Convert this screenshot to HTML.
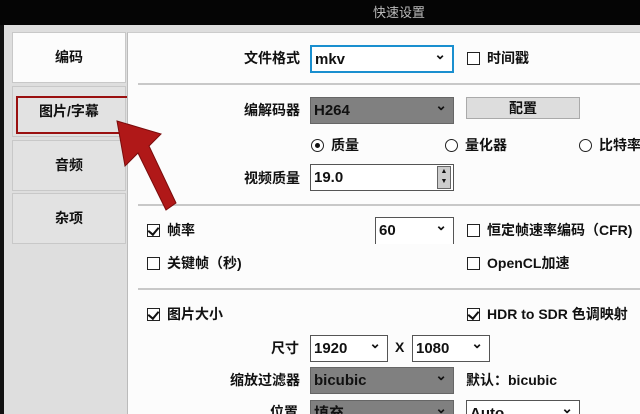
<!DOCTYPE html><html><head><meta charset="utf-8"><style>
*{margin:0;padding:0;box-sizing:border-box}
html,body{width:640px;height:414px;overflow:hidden}
body{background:#dedede;font-family:"Liberation Sans","Noto Sans CJK SC",sans-serif;font-size:14px;font-weight:bold;color:#111;position:relative}
.a{position:absolute;white-space:nowrap;line-height:18px}
.title{left:0;top:0;width:640px;height:25px;background:#050505;color:#bbb;font-weight:normal;font-size:13px;text-align:center;line-height:25px;padding-left:158px}
.lb{left:0;top:25px;width:4px;height:389px;background:#111}
.tab{left:12px;width:114px;height:51px;background:#e2e2e2;border:1px solid #c8c8c8;text-align:center;line-height:48px}
.panel{left:127px;top:32px;width:513px;height:382px;background:#fcfcfc;border-left:1px solid #bbb;border-top:1px solid #ccc}
.hr{left:138px;width:502px;height:2px;background:#c8c8c8}
.sel{height:27px;border:1px solid #555;background:#fff;line-height:25px;padding-left:3px;font-size:15px}
.sel.g{background:#808080;border-color:#666}
.sel:after{content:"⌄";position:absolute;right:6px;top:-5px;font-size:14px}
.cb{width:13px;height:13px;border:1.5px solid #222;background:#fff}
.cb.c:after{content:"";position:absolute;left:2px;top:0px;width:5px;height:8px;border-right:2px solid #111;border-bottom:2px solid #111;transform:rotate(40deg)}
.rd{width:13px;height:13px;border:1.5px solid #222;border-radius:50%;background:#fff}
.rd.c:after{content:"";position:absolute;left:2.5px;top:2.5px;width:5px;height:5px;border-radius:50%;background:#111}
</style></head><body>
<div class="a title">快速设置</div>
<div class="a lb"></div>
<div class="a tab" style="top:32px;background:#fcfcfc">编码</div>
<div class="a tab" style="top:86px">图片/字幕</div>
<div class="a tab" style="top:140px">音频</div>
<div class="a tab" style="top:193px">杂项</div>
<div class="a" style="left:16px;top:96px;width:131px;height:38px;border:2px solid #9a1010"></div>
<div class="a panel"></div>
<div class="a hr" style="top:83px"></div>
<div class="a hr" style="top:204px"></div>
<div class="a hr" style="top:288px"></div>

<div class="a" style="left:244px;top:49px">文件格式</div>
<div class="a sel" style="left:310px;top:45px;width:144px;height:28px;border:2px solid #1a8fcf">mkv</div>
<div class="a cb" style="left:467px;top:52px"></div><div class="a" style="left:487px;top:49px">时间戳</div>

<div class="a" style="left:244px;top:101px">编解码器</div>
<div class="a sel g" style="left:310px;top:97px;width:144px">H264</div>
<div class="a" style="left:466px;top:97px;width:114px;height:22px;background:#ddd;border:1px solid #aaa;text-align:center;line-height:20px">配置</div>
<div class="a rd c" style="left:311px;top:139px"></div><div class="a" style="left:331px;top:136px">质量</div>
<div class="a rd" style="left:445px;top:139px"></div><div class="a" style="left:465px;top:136px">量化器</div>
<div class="a rd" style="left:579px;top:139px"></div><div class="a" style="left:599px;top:136px">比特率</div>
<div class="a" style="left:244px;top:169px">视频质量</div>
<div class="a" style="left:310px;top:164px;width:144px;height:27px;border:1px solid #555;background:#fff;line-height:25px;padding-left:3px;font-size:15px">19.0</div>
<div class="a" style="left:437px;top:166px;width:14px;height:23px;background:#ccc;border:1px solid #666;font-size:7px;line-height:10px;text-align:center">▲<br>▼</div>

<div class="a cb c" style="left:147px;top:224px"></div><div class="a" style="left:167px;top:221px">帧率</div>
<div class="a sel" style="left:375px;top:217px;width:79px;border-bottom:none">60</div>
<div class="a cb" style="left:467px;top:224px"></div><div class="a" style="left:487px;top:221px">恒定帧速率编码（CFR)</div>
<div class="a cb" style="left:147px;top:257px"></div><div class="a" style="left:167px;top:254px">关键帧（秒)</div>
<div class="a cb" style="left:467px;top:257px"></div><div class="a" style="left:487px;top:254px">OpenCL加速</div>

<div class="a cb c" style="left:147px;top:308px"></div><div class="a" style="left:167px;top:305px">图片大小</div>
<div class="a cb c" style="left:467px;top:308px"></div><div class="a" style="left:487px;top:305px">HDR to SDR 色调映射</div>
<div class="a" style="left:271px;top:339px">尺寸</div>
<div class="a sel" style="left:310px;top:335px;width:78px">1920</div>
<div class="a" style="left:395px;top:338px">X</div>
<div class="a sel" style="left:412px;top:335px;width:78px">1080</div>
<div class="a" style="left:230px;top:371px">缩放过滤器</div>
<div class="a sel g" style="left:310px;top:367px;width:144px">bicubic</div>
<div class="a" style="left:466px;top:371px">默认：bicubic</div>
<div class="a" style="left:270px;top:403px">位置</div>
<div class="a sel g" style="left:310px;top:400px;width:144px">填充</div>
<div class="a sel" style="left:466px;top:400px;width:114px">Auto</div>

<svg class="a" style="left:0;top:0" width="640" height="414"><polygon points="117,121 161,134 149,146 176,203 166,210 138,153 125,166" fill="#b01818" stroke="#7a0c0c" stroke-width="1"/></svg>
</body></html>
